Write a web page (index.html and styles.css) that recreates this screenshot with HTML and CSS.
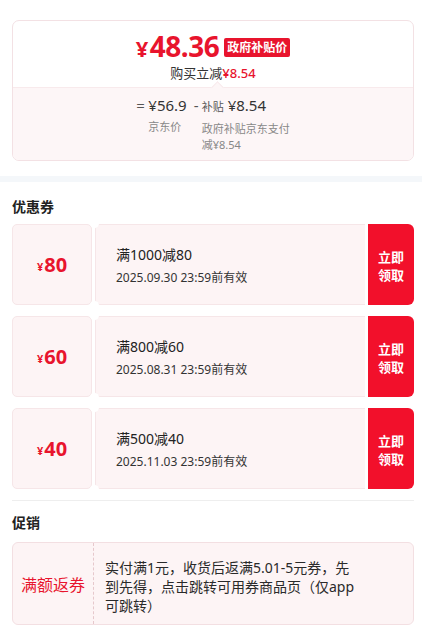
FILE: index.html
```html
<!DOCTYPE html>
<html lang="zh">
<head>
<meta charset="utf-8">
<link rel="stylesheet" href="styles.css">
</head>
<body>
<div class="page">
  <section class="price-card">
    <div class="price-top">
      <div class="price-line">
        <span class="price-big"><span class="yen">¥</span>48.36</span>
        <span class="tag">政府补贴价</span>
      </div>
      <div class="reduce">购买立减<span class="red">¥8.54</span></div>
    </div>
    <div class="price-bottom">
      <div class="calc">
        <div class="col">
          <span class="op op-eq">=</span>
          <div class="stack">
            <div class="calc-val">¥56.9</div>
            <div class="calc-label">京东价</div>
          </div>
        </div>
        <div class="col">
          <span class="op op-minus">-</span>
          <div class="stack">
            <div class="calc-val"><span class="sub">补贴</span>¥8.54</div>
            <div class="calc-label narrow">政府补贴京东支付减¥8.54</div>
          </div>
        </div>
      </div>
    </div>
  </section>

  <div class="band"></div>

  <section class="section">
    <h2 class="title">优惠券</h2>
    <div class="coupons">
      <div class="coupon">
        <div class="c-left"><span class="c-yen">¥</span>80</div>
        <div class="c-mid">
          <div class="c-rule">满1000减80</div>
          <div class="c-date">2025.09.30 23:59前有效</div>
        </div>
        <div class="c-btn">立即<br>领取</div>
      </div>
      <div class="coupon">
        <div class="c-left"><span class="c-yen">¥</span>60</div>
        <div class="c-mid">
          <div class="c-rule">满800减60</div>
          <div class="c-date">2025.08.31 23:59前有效</div>
        </div>
        <div class="c-btn">立即<br>领取</div>
      </div>
      <div class="coupon">
        <div class="c-left"><span class="c-yen">¥</span>40</div>
        <div class="c-mid">
          <div class="c-rule">满500减40</div>
          <div class="c-date">2025.11.03 23:59前有效</div>
        </div>
        <div class="c-btn">立即<br>领取</div>
      </div>
    </div>
  </section>

  <div class="divider"></div>

  <section class="section promo-sec">
    <h2 class="title">促销</h2>
    <div class="promo">
      <div class="p-left">满额返券</div>
      <div class="p-text">实付满1元，收货后返满5.01-5元券，先到先得，点击跳转可用券商品页（仅app可跳转）</div>
    </div>
  </section>
</div>
</body>
</html>
```

FILE: styles.css
```css
* { box-sizing: border-box; }
html, body { margin: 0; padding: 0; background: #fff; }
body {
  font-family: "Noto Sans", "Noto Sans CJK SC", sans-serif;
  color: #222;
  width: 422px;
  overflow: hidden;
}
.page { padding-top: 20px; }

.price-card {
  margin: 0 8px 0 12px;
  border: 1px solid #f3e1e4;
  border-radius: 7px;
  overflow: hidden;
}
.price-top {
  height: 66px;
  padding-top: 11px;
  text-align: center;
}
.price-line {
  display: flex;
  justify-content: center;
  align-items: center;
  gap: 5px;
  height: 30px;
}
.price-big {
  color: #e8142d;
  font-size: 28px;
  font-weight: 700;
  line-height: 30px;
  letter-spacing: -0.5px;
}
.price-big .yen { font-size: 22px; margin-right: 2px; }
.tag {
  background: #e8142d;
  color: #fff;
  font-size: 12px;
  font-weight: 700;
  line-height: 19px;
  padding: 0 3px;
  border-radius: 2px;
  margin-top: 1px;
}
.reduce {
  font-size: 13px;
  line-height: 18px;
  margin-top: 2px;
  color: #333;
}
.red { color: #e8142d; font-weight: 500; }

.price-bottom {
  position: relative;
  background: #fdf6f7;
  border-top: 1px solid #f8eaec;
  height: 73px;
  padding-top: 7px;
}
.price-bottom::before {
  content: "";
  position: absolute;
  left: 200px;
  top: -5px;
  width: 8px;
  height: 8px;
  background: #fdf6f7;
  border-left: 1px solid #f8eaec;
  border-top: 1px solid #f8eaec;
  transform: rotate(45deg);
}
.calc {
  display: flex;
  justify-content: center;
  padding-left: 2px;
}
.col { display: flex; align-items: flex-start; }
.op {
  font-size: 15px;
  line-height: 20px;
  color: #555;
}
.op-eq { width: 12px; }
.op-minus { width: 8px; margin-left: 7px; }
.calc-val {
  font-size: 15px;
  line-height: 20px;
  color: #333;
  white-space: nowrap;
}
.sub { font-size: 11px; margin-right: 4px; color: #555; }
.calc-label {
  font-size: 11px;
  line-height: 16px;
  color: #888;
  margin-top: 4px;
}
.calc-label.narrow { width: 90px; }

.band {
  height: 6px;
  background: #f4f7fa;
  margin-top: 15px;
}

.section { padding: 0 8px 0 12px; }
.title {
  margin: 0;
  font-size: 14px;
  font-weight: 700;
  line-height: 20px;
  padding-top: 15px;
  padding-bottom: 7px;
  color: #222;
}
.coupons { display: flex; flex-direction: column; gap: 11px; }
.coupon {
  position: relative;
  display: flex;
  height: 81px;
  gap: 3px;
}
.coupon::before, .coupon::after {
  content: "";
  position: absolute;
  left: 78px;
  width: 9px;
  height: 9px;
  border-radius: 50%;
  background: #fff;
}
.coupon::before { top: -5px; }
.coupon::after { bottom: -5px; }
.c-left {
  width: 80px;
  background: #fdf4f5;
  border: 1px solid #f6e6e8;
  border-radius: 5px;
  display: flex;
  align-items: center;
  justify-content: center;
  color: #e8142d;
  font-size: 20px;
  font-weight: 700;
}
.c-yen { font-size: 11px; margin-right: 1px; margin-top: 3px; }
.c-mid {
  flex: 1;
  background: #fdf4f5;
  border: 1px solid #f6e6e8;
  border-right: none;
  border-radius: 5px 0 0 5px;
  padding: 20px 0 0 20px;
}
.c-rule { font-size: 14px; line-height: 20px; color: #222; }
.c-date { font-size: 12px; line-height: 18px; color: #333; margin-top: 4px; }
.c-btn {
  width: 46px;
  background: #f2102b;
  color: #fff;
  border-radius: 0 6px 6px 0;
  font-size: 13px;
  font-weight: 700;
  line-height: 18px;
  display: flex;
  align-items: center;
  justify-content: center;
  text-align: center;
  padding-top: 3px;
}

.divider {
  height: 1px;
  background: #eeeeee;
  margin: 11px 8px 0 12px;
}
.promo-sec .title { padding-top: 12px; padding-bottom: 9px; }
.promo {
  display: flex;
  height: 83px;
  background: #fdf4f5;
  border: 1px solid #f3dfe2;
  border-radius: 6px;
}
.p-left {
  width: 81px;
  flex: none;
  border-right: 1px dashed #e6c8cc;
  display: flex;
  align-items: center;
  justify-content: center;
  color: #e8142d;
  font-size: 16px;
}
.p-text {
  flex: none;
  width: 263px;
  padding: 15px 0 0 11px;
  font-size: 14px;
  line-height: 19px;
  color: #2a2a2a;
}
```
